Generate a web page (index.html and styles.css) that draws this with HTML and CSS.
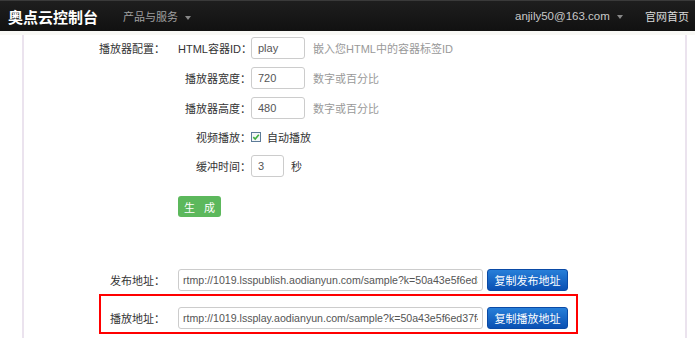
FILE: index.html
```html
<!DOCTYPE html>
<html lang="zh-CN">
<head>
    <meta charset="UTF-8">
    <meta name="viewport" content="width=device-width, initial-scale=1.0">
    <title>奥点云控制台 - 播放器配置</title>
    <link rel="stylesheet" href="styles.css">
</head>
<body>

<!-- Top navigation -->
<header class="navbar">
    <a class="brand" href="#">奥点云控制台</a>
    <span class="nav-menu">产品与服务 <i class="caret"></i></span>
    <span class="nav-user">anjily50@163.com <i class="caret"></i></span>
    <a class="nav-home" href="#">官网首页</a>
</header>
<div class="strip"></div>

<div class="page">

    <div class="config">
        <div class="section-label">播放器配置<span class="colon">：</span></div>
        <div class="fields">
            <div class="field">
                <label>HTML容器ID<span class="colon">：</span></label>
                <input class="input" type="text" value="play">
                <span class="hint">嵌入您HTML中的容器标签ID</span>
            </div>
            <div class="field">
                <label>播放器宽度<span class="colon">：</span></label>
                <input class="input" type="text" value="720">
                <span class="hint">数字或百分比</span>
            </div>
            <div class="field">
                <label>播放器高度<span class="colon">：</span></label>
                <input class="input" type="text" value="480">
                <span class="hint">数字或百分比</span>
            </div>
            <div class="field field-check">
                <label>视频播放<span class="colon">：</span></label>
                <span class="checkbox">
                    <svg width="10" height="10" viewBox="0 0 10 10"><path d="M2.3 5.2 L4.2 7 L7.8 2.8" fill="none" stroke="#3fae3f" stroke-width="1.6"/></svg>
                </span>
                <span class="check-text">自动播放</span>
            </div>
            <div class="field">
                <label>缓冲时间<span class="colon">：</span></label>
                <input class="input input-sm" type="text" value="3">
                <span class="unit">秒</span>
            </div>
            <button class="btn-green">生 成</button>
        </div>
    </div>

    <!-- Addresses -->
    <div class="addr-row">
        <label>发布地址<span class="colon">：</span></label>
        <input class="input input-url" type="text" value="rtmp://1019.lsspublish.aodianyun.com/sample?k=50a43e5f6ed37f4a8c2d&amp;t=1441">
        <button class="btn-blue">复制发布地址</button>
    </div>
    <div class="addr-box">
        <div class="addr-row">
            <label>播放地址<span class="colon">：</span></label>
            <input class="input input-url" type="text" value="rtmp://1019.lssplay.aodianyun.com/sample?k=50a43e5f6ed37f4a8c2d&amp;t=1441">
            <button class="btn-blue">复制播放地址</button>
        </div>
    </div>

</div>

</body>
</html>
```

FILE: styles.css
```css
body {
    margin: 0;
    font-family: "Liberation Sans", "Noto Sans CJK SC", sans-serif;
    font-size: 11px;
    color: #333;
    background-color: #fff;
    overflow: hidden;
}
.navbar {
    display: flex;
    align-items: center;
    height: 30px;
    border-top: 1px solid #3a3a3a;
    background: linear-gradient(#1e1e1e, #111);
}
.brand {
    margin-left: 8px;
    font-size: 15px;
    font-weight: bold;
    color: #fff;
    text-decoration: none;
}
.nav-menu {
    margin-left: 25px;
    color: #a0a0a0;
}
.nav-user {
    margin-left: auto;
    font-size: 11.5px;
    color: #c8c8c8;
}
.nav-home {
    margin: 0 6px 0 22px;
    color: #dcdcdc;
    text-decoration: none;
}
.caret {
    display: inline-block;
    margin-left: 4px;
    vertical-align: middle;
    border-top: 4px solid #888;
    border-left: 3px solid transparent;
    border-right: 3px solid transparent;
}
.strip {
    height: 4px;
    background-color: #f8f8f5;
}
.page {
    margin: 0 8px 0 22px;
    height: 310px;
    border-left: 2px solid #ebe3ee;
    border-right: 2px solid #ebe3ee;
}
.colon {
    font-family: "Noto Sans CJK TC", sans-serif;
}
.config {
    display: flex;
    padding-top: 2px;
}
.section-label {
    width: 141px;
    padding-right: 13px;
    text-align: right;
    line-height: 22px;
}
.field {
    display: flex;
    align-items: center;
    height: 22px;
    margin-bottom: 8px;
}
.field label {
    width: 73px;
    text-align: right;
    white-space: nowrap;
}
.field-check {
    height: 20px;
}
.input {
    box-sizing: border-box;
    width: 54px;
    height: 22px;
    padding: 0 6px;
    border: 1px solid #ccc;
    border-radius: 3px;
    font-family: "Liberation Sans", "Noto Sans CJK SC", sans-serif;
    font-size: 11px;
    color: #555;
    outline: none;
}
.input-sm {
    width: 33px;
}
.hint {
    margin-left: 8px;
    color: #999;
}
.unit {
    margin-left: 7px;
}
.checkbox {
    box-sizing: border-box;
    display: inline-flex;
    width: 10px;
    height: 10px;
    border: 1px solid #5d7b98;
    background-color: #f4f6f8;
}
.checkbox svg {
    margin: -1px;
}
.check-text {
    margin-left: 6px;
}
.btn-green {
    width: 43px;
    height: 21px;
    margin-top: 11px;
    padding: 0;
    border: none;
    border-radius: 3px;
    background-color: #5cb85c;
    color: #fff;
    font-family: "Liberation Sans", "Noto Sans CJK SC", sans-serif;
    font-size: 11px;
    letter-spacing: 3px;
    text-indent: 3px;
}
.addr-row {
    display: flex;
    align-items: center;
    margin-top: 52px;
}
.addr-row label {
    width: 141px;
    padding-right: 13px;
    text-align: right;
}
.input-url {
    width: 305px;
    padding: 0 4px;
    font-size: 10.6px;
}
.btn-blue {
    width: 81px;
    height: 22px;
    margin-left: 4px;
    padding: 0;
    border: 1px solid #0a4aa6;
    border-radius: 3px;
    background: linear-gradient(#277fd9, #0a50b3);
    color: #fff;
    font-family: "Liberation Sans", "Noto Sans CJK SC", sans-serif;
    font-size: 11px;
}
.addr-box {
    box-sizing: border-box;
    width: 479px;
    height: 40px;
    margin: 3px 0 0 75px;
    padding-top: 11px;
    border: 2px solid #f00;
}
.addr-box .addr-row {
    margin-top: 0;
}
.addr-box .addr-row label {
    width: 64px;
}
```
